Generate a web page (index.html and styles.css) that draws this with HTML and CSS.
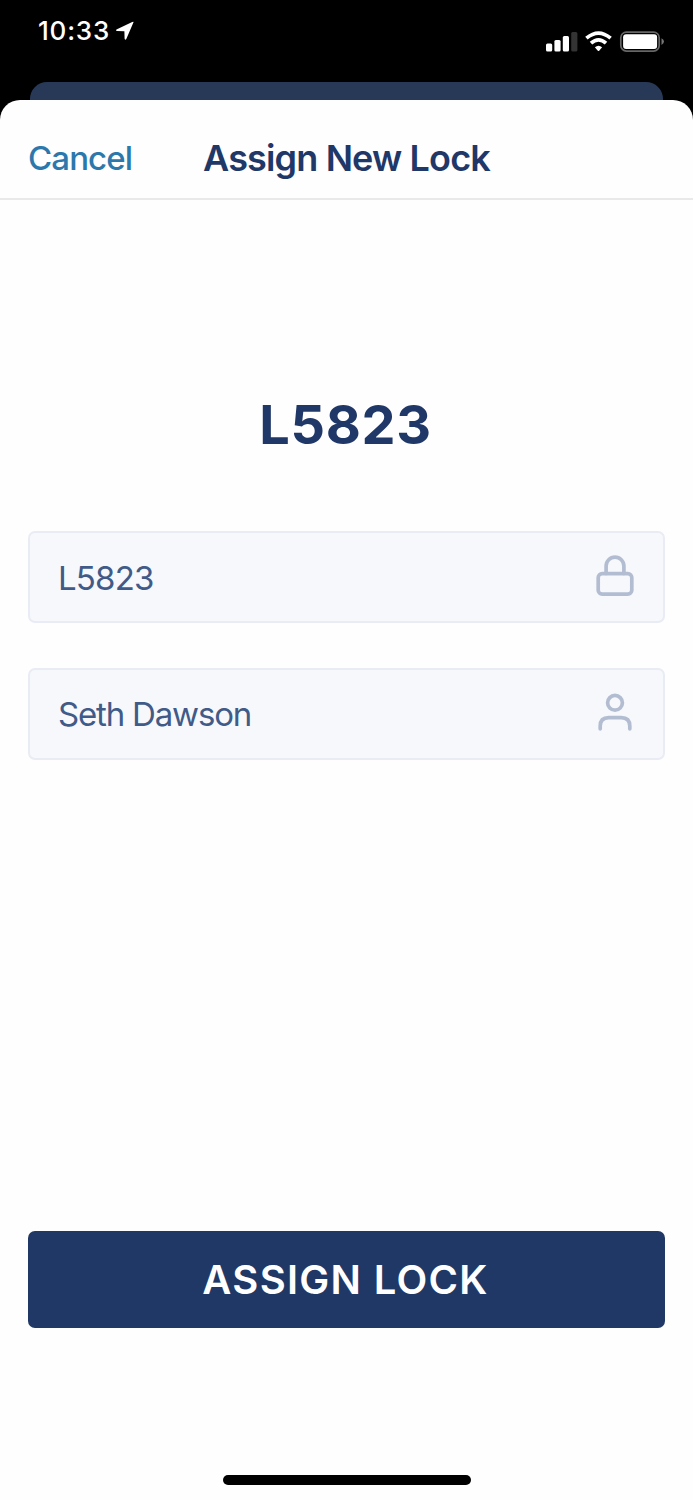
FILE: index.html
```html
<!DOCTYPE html>
<html lang="en">
<head>
<meta charset="utf-8">
<title>Assign New Lock</title>
<link rel="stylesheet" href="styles.css">
</head>
<body>
<div class="screen">
  <div class="status">
    <div class="clock">
      <span class="time">10:33</span>
      <svg class="location" width="20" height="20" viewBox="0 0 20 20"><path d="M18.4 1.4 11.4 17.7Q10.4 19.8 9.6 17.7L9.4 10.2 2.2 9.9Q-.1 9.3 2 8.2L17.2 1Q19 .3 18.4 1.4Z" fill="#fff"/></svg>
    </div>
    <svg class="indicators" width="120" height="24" viewBox="0 0 120 24">
      <g fill="#fff">
        <rect x="2" y="13.6" width="6.2" height="7.8" rx="1.5"/>
        <rect x="10.4" y="10" width="6.2" height="11.4" rx="1.5"/>
        <rect x="18.8" y="6" width="6.2" height="15.4" rx="1.5"/>
        <rect x="27.2" y="2" width="6.2" height="19.4" rx="1.5" fill="#333"/>
      </g>
      <g fill="none" stroke="#fff" stroke-width="3.7">
        <path d="M42.4 8.2Q54.5 -2 66.6 8.2"/>
        <path d="M47 13.2Q54.5 6.5 62 13.2"/>
      </g>
      <path d="M50.9 17.3Q54.5 14 58.1 17.3L55.2 20.7Q54.5 21.5 53.8 20.7Z" fill="#fff"/>
      <rect x="76.8" y="2.1" width="38.4" height="19" rx="5.6" fill="none" stroke="#666" stroke-width="1.7"/>
      <rect x="79.1" y="4.3" width="34" height="14.8" rx="3" fill="#fff"/>
      <path d="M117.5 8.2Q120 9.6 120 11.6T117.5 15Z" fill="#777"/>
    </svg>
  </div>
  <div class="back-card"></div>
  <main class="sheet">
    <header class="header">
      <a class="cancel">Cancel</a>
      <h1 class="title">Assign New Lock</h1>
    </header>
    <h2 class="lock-id">L5823</h2>
    <div class="fields">
      <div class="field">
        <span class="lock-value">L5823</span>
        <svg width="40" height="44" viewBox="0 0 40 44" class="icon"><rect x="3.2" y="18.6" width="33.6" height="20.6" rx="4"/><path d="M11.1 18.4V11.1a8.9 8.9 0 0 1 17.8 0V18.4"/></svg>
      </div>
      <div class="field">
        <span class="person-value">Seth Dawson</span>
        <svg width="40" height="44" viewBox="0 0 40 44" class="icon"><circle cx="20" cy="10.8" r="7.4"/><path d="M5.2 36.8V34.1Q5.2 25.6 13.7 25.6H26.3Q34.8 25.6 34.8 34.1V36.8"/></svg>
      </div>
    </div>
    <div class="assign"><span class="assign-label">ASSIGN LOCK</span></div>
    <div class="home-bar"></div>
  </main>
</div>
</body>
</html>
```
FILE: styles.css
```css
* { box-sizing: border-box; }
body { margin: 0; background: #000; font-family: Inter, "Liberation Sans", sans-serif; }
h1, h2 { margin: 0; }
svg { display: block; flex: none; }
span, h1, h2, a { white-space: nowrap; }
.screen { width: 693px; height: 1500px; background: #000; display: flex; flex-direction: column; overflow: hidden; }
.status { height: 82px; flex: none; display: flex; justify-content: space-between; align-items: flex-start; padding: 15px 29px 0 38px; }
.clock { display: flex; align-items: flex-start; gap: 5px; }
.time { color: #fff; font-size: 26px; line-height: 32px; font-weight: 500; letter-spacing: 0.8px; }
.location { margin-top: 6px; }
.indicators { margin-top: 15px; }
.back-card { height: 18px; flex: none; margin: 0 30px; background: #283958; border-radius: 17px 17px 0 0; }
.sheet { flex: 1; background: #fefefe; border-radius: 20px 20px 0 0; display: flex; flex-direction: column; align-items: stretch; }
.header { height: 100px; flex: none; border-bottom: 2px solid #e9e9eb; display: grid; grid-template-columns: 1fr auto 1fr; align-items: center; padding: 18px 28px 0; }
.cancel { color: #2c78ac; font-size: 33px; line-height: 40px; letter-spacing: -0.9px; font-weight: 450; }
.title { color: #1f3868; font-size: 36px; line-height: 44px; font-weight: 600; letter-spacing: -0.85px; }
.lock-id { color: #1f3868; font-size: 54px; line-height: 66px; font-weight: 700; text-align: center; margin-top: 192px; letter-spacing: 0.7px; padding-right: 2px; }
.fields { display: grid; gap: 45px; margin: 73px 28px 0; }
.field { height: 92px; background: #f7f8fc; border: 2px solid #e9ecf4; border-radius: 7px; display: flex; align-items: center; justify-content: space-between; padding: 0 28px; color: #415b88; font-size: 33px; }
.lock-value { letter-spacing: -0.8px; padding-top: 1px; }
.person-value { letter-spacing: -1.18px; }
.icon { fill: none; stroke: #b3bdd1; stroke-width: 3.7; stroke-linecap: round; }
.assign { height: 97px; flex: none; margin: 471px 28px 0; background: #203866; border-radius: 7px; display: flex; align-items: center; justify-content: center; }
.assign-label { color: #fff; font-size: 40px; font-weight: 600; letter-spacing: 1.3px; padding-right: 2px; }
.home-bar { width: 248px; height: 10px; border-radius: 5px; background: #000; margin: 147px auto 0; }
```
